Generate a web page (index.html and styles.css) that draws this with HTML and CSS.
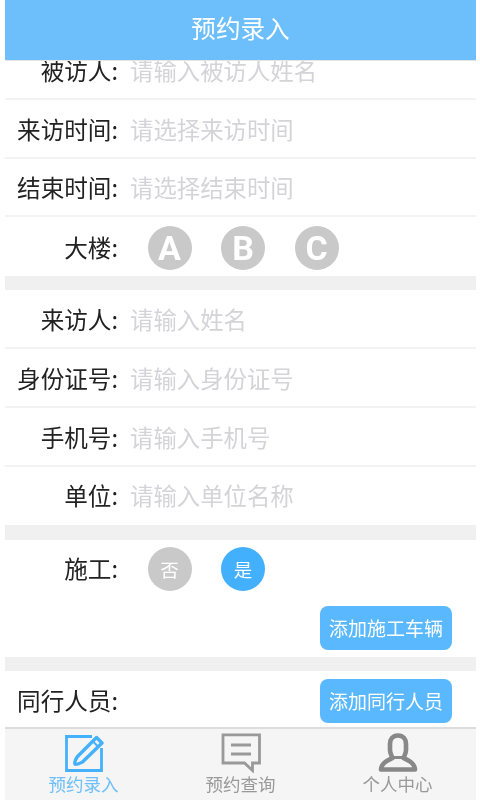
FILE: index.html
```html
<!DOCTYPE html>
<html lang="zh-CN">
<head>
<meta charset="utf-8">
<title>预约录入</title>
<link rel="stylesheet" href="styles.css">
</head>
<body>
<div class="app">
  <header class="header">预约录入</header>
  <main class="main">
    <div class="scroll">
      <section class="group">
        <div class="row"><span class="label">被访人:</span><span class="ph">请输入被访人姓名</span></div>
        <div class="row"><span class="label">来访时间:</span><span class="ph">请选择来访时间</span></div>
        <div class="row"><span class="label">结束时间:</span><span class="ph">请选择结束时间</span></div>
        <div class="row plain low"><span class="label">大楼:</span>
          <div class="choices"><span class="dot letter">A</span><span class="dot letter">B</span><span class="dot letter">C</span></div>
        </div>
      </section>
      <section class="group">
        <div class="row"><span class="label">来访人:</span><span class="ph">请输入姓名</span></div>
        <div class="row"><span class="label">身份证号:</span><span class="ph">请输入身份证号</span></div>
        <div class="row"><span class="label">手机号:</span><span class="ph">请输入手机号</span></div>
        <div class="row plain"><span class="label">单位:</span><span class="ph">请输入单位名称</span></div>
      </section>
      <section class="group">
        <div class="row plain"><span class="label">施工:</span>
          <div class="choices"><span class="dot small">否</span><span class="dot small on">是</span></div>
        </div>
        <div class="btn-row"><button class="btn">添加施工车辆</button></div>
      </section>
      <section class="group">
        <div class="row plain split"><span class="label">同行人员:</span><button class="btn">添加同行人员</button></div>
      </section>
    </div>
  </main>
  <nav class="tabs">
    <div class="tab active">
      <svg class="icon" viewBox="0 0 40 40" fill="none">
        <path d="M28 3.5H2.5V37.5H37.5V15" stroke="#45b1fd" stroke-width="2.8"/>
        <path d="M32.5 4.5L38 10L18.5 29Q12.5 32 11 31Q10 29 13.5 23.5Z" stroke="#45b1fd" stroke-width="3.4" stroke-linejoin="round"/>
        <path d="M29 8.5L34 13.5" stroke="#45b1fd" stroke-width="2"/>
      </svg>
      <span>预约录入</span>
    </div>
    <div class="tab">
      <svg class="icon" viewBox="0 0 40 40" fill="none">
        <path d="M2 1.8H38.5V30H31.5V37.5L23.5 30H2Z" stroke="#999" stroke-width="2.8"/>
        <path d="M10 12H30M10 21H30" stroke="#999" stroke-width="3"/>
      </svg>
      <span>预约查询</span>
    </div>
    <div class="tab">
      <svg class="icon" viewBox="0 0 40 40" fill="none">
        <path d="M20 2.5C14.5 2.5 12 6.5 12 11V17C12 21 14 23 14.5 25C10 27.5 3.5 29.5 3 36.5H37C36.5 29.5 30 27.5 25.5 25C26 23 28 21 28 17V11C28 6.5 25.5 2.5 20 2.5Z" stroke="#888" stroke-width="4.6" stroke-linejoin="round"/>
        <path d="M14 24.5H26" stroke="#888" stroke-width="3"/>
      </svg>
      <span>个人中心</span>
    </div>
  </nav>
</div>
</body>
</html>
```

FILE: styles.css
```css
* { box-sizing: border-box; }
html, body { height: 100%; }
body {
  margin: 0;
  background: #fff;
  font-family: "Noto Sans CJK SC", "Liberation Sans", sans-serif;
}
.app {
  width: 471px;
  height: 800px;
  margin-left: 5px;
  display: flex;
  flex-direction: column;
  overflow: hidden;
  filter: blur(0.35px);
}
.header {
  flex: none;
  height: 61px;
  line-height: 55px;
  background: #6dbffb;
  border-bottom: 1px solid #e4e4e4;
  color: #fff;
  font-size: 24.6px;
  text-align: center;
  position: relative;
  z-index: 1;
}
.main { flex: 1; min-height: 0; overflow: hidden; }
.scroll {
  margin-top: -20px;
  display: flex;
  flex-direction: column;
  gap: 14.4px;
  background: #f0f0f0;
}
.group { background: #fff; }
.row {
  height: 58.75px;
  display: flex;
  align-items: center;
  padding-top: 2.5px;
  border-bottom: 2px solid #f3f3f3;
  font-size: 24px;
  line-height: 1;
}
.row.plain { border-bottom: 0; padding-top: 0; }
.row.low { padding-top: 2px; }
.split { justify-content: space-between; padding-right: 24px; }
.label {
  flex: none;
  width: 113px;
  text-align: right;
  color: #222;
  font-size: 23.6px;
}
.ph {
  margin-left: 12px;
  color: #d4d4d8;
  font-size: 23.4px;
}
.choices { display: flex; gap: 29.5px; margin-left: 29.5px; }
.dot {
  width: 44px;
  height: 44px;
  border-radius: 50%;
  background: #c9c9c9;
  color: #fff;
  display: flex;
  align-items: center;
  justify-content: center;
}
.letter { font-family: Roboto, sans-serif; font-weight: 700; font-size: 34px; }
.small { font-size: 18.5px; }
.on { background: #42b0fd; }
.btn-row { display: flex; justify-content: flex-end; padding: 7px 24px 7.5px 0; }
.btn {
  width: 132px;
  height: 44px;
  padding: 0;
  border: 0;
  border-radius: 8px;
  background: #5ab8ff;
  color: #fff;
  font-family: inherit;
  font-size: 19px;
}
.tabs {
  flex: none;
  height: 73px;
  display: flex;
  background: #f5f5f5;
  border-top: 2px solid #dcdcdc;
}
.tab {
  flex: 1;
  display: flex;
  flex-direction: column;
  align-items: center;
  color: #999;
  font-size: 17.5px;
  line-height: 20px;
  padding-top: 4px;
}
.tab.active { color: #6dbffb; }
.icon { width: 40px; height: 40px; display: block; margin-bottom: 1px; }
```
